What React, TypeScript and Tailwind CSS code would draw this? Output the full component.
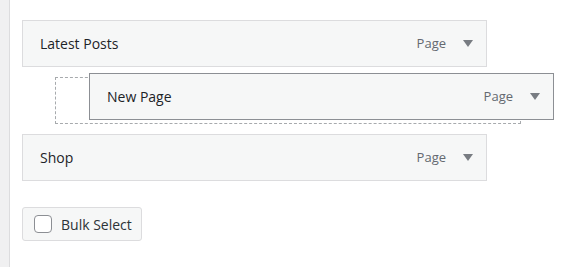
import * as React from "react";

const Arrow: React.FunctionComponent = () => (
	<svg width="10" height="7" viewBox="0 0 10 7" className="block">
		<path d="M0 0 L10 0 L5 7 Z" fill="#787c82" />
	</svg>
);

interface MenuItemProps {
	title: string;
	type: string;
	dragging?: boolean;
}

const MenuItem: React.FunctionComponent<MenuItemProps> = ({ title, type, dragging }) => {
	return (
		<div
			className={
				"flex items-center h-[47px] w-[465px] bg-[#f6f7f7] pl-[17px] pr-[13px] border " +
				(dragging ? "border-[#8c8f94]" : "border-[#dcdcde]")
			}
		>
			<span className="flex-1 text-[14px] text-[#1d2327]">{title}</span>
			<span className="text-[13px] text-[#646970] mr-[17px]">{type}</span>
			<Arrow />
		</div>
	);
};

export default function App() {
	return (
		<div className="flex h-[267px] w-full bg-white" style={{ fontFamily: '"Open Sans", "Noto Sans", sans-serif' }}>
			<div className="w-[10px] shrink-0 bg-[#f0f0f1] border-r border-[#dcdcde]"></div>
			<div className="flex flex-col pl-[12px] pt-[20px]">
				<MenuItem title="Latest Posts" type="Page" />
				<div className="relative mt-[10px] ml-[33px] h-[47px] w-[466px] border border-dashed border-[#a7aaad]">
					<div className="absolute left-[33px] top-[-5px]">
						<MenuItem title="New Page" type="Page" dragging />
					</div>
				</div>
				<div className="mt-[10px]">
					<MenuItem title="Shop" type="Page" />
				</div>
				<button className="mt-[26px] flex items-center h-[34px] w-[120px] rounded-[3px] border border-[#dcdcde] bg-[#f6f7f7] pl-[11px]">
					<span className="block w-[18px] h-[18px] rounded-[4px] border border-[#8c8f94] bg-white"></span>
					<span className="ml-[9px] text-[14px] text-[#2c3338]">Bulk Select</span>
				</button>
			</div>
		</div>
	);
}
